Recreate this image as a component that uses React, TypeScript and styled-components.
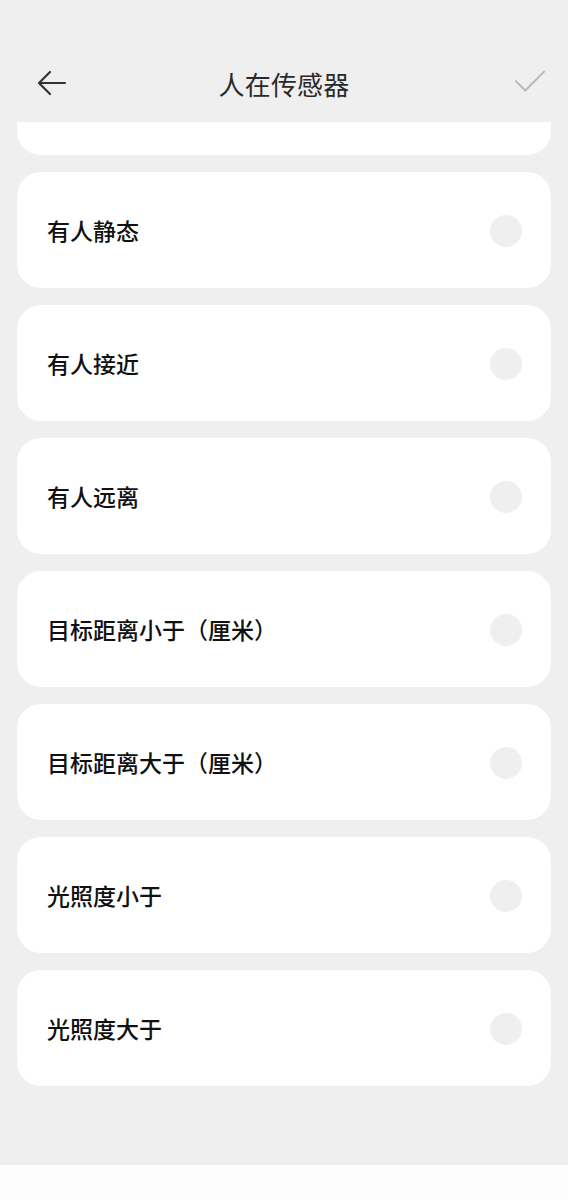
import React, { useLayoutEffect, useRef } from 'react';
import styled, { createGlobalStyle } from 'styled-components';

const GlobalStyle = createGlobalStyle`
  html, body {
    margin: 0;
    padding: 0;
    background: #efefef;
  }
  body {
    font-family: "Noto Sans CJK SC", "Noto Sans", sans-serif;
  }
`;

const Screen = styled.div`
  width: 568px;
  height: 1200px;
  display: flex;
  flex-direction: column;
  background: #efefef;
  overflow: hidden;
`;

const Header = styled.div`
  height: 122px;
  padding: 44px 22px 0;
  box-sizing: border-box;
  flex-shrink: 0;
`;

const HeaderRow = styled.div`
  height: 78px;
  display: grid;
  grid-template-columns: 1fr auto 1fr;
  align-items: center;
`;

const IconButton = styled.button<{ $side: 'left' | 'right' }>`
  border: none;
  background: none;
  padding: 0;
  width: 32px;
  height: 32px;
  display: flex;
  align-items: center;
  justify-content: center;
  cursor: pointer;
  justify-self: ${({ $side }) => ($side === 'left' ? 'start' : 'end')};
  margin-left: ${({ $side }) => ($side === 'left' ? '14px' : '0')};
`;

const Title = styled.div`
  font-size: 26px;
  color: #2a2a2a;
  letter-spacing: 0.2px;
`;

const ScrollArea = styled.div`
  flex: 1;
  overflow-y: auto;
  scrollbar-width: none;
  &::-webkit-scrollbar {
    display: none;
  }
`;

const List = styled.div`
  display: flex;
  flex-direction: column;
  gap: 17px;
  padding: 16px 17px 80px;
`;

const Card = styled.label`
  height: 116px;
  background: #fff;
  border-radius: 24px;
  display: flex;
  align-items: center;
  justify-content: space-between;
  padding: 0 29px 0 30px;
  box-sizing: border-box;
  cursor: pointer;
`;

const Label = styled.span`
  font-size: 23px;
  font-weight: 500;
  color: #111;
`;

const Radio = styled.span<{ $checked?: boolean }>`
  width: 32px;
  height: 32px;
  margin-top: 2px;
  border-radius: 50%;
  background: ${({ $checked }) => ($checked ? '#2f7cf6' : '#efefef')};
  flex-shrink: 0;
`;

const Footer = styled.div`
  height: 35px;
  background: #fdfdfd;
  flex-shrink: 0;
`;

const options = [
  '无人',
  '有人静态',
  '有人接近',
  '有人远离',
  '目标距离小于（厘米）',
  '目标距离大于（厘米）',
  '光照度小于',
  '光照度大于'
];

export default function App () {
  const scrollRef = useRef<HTMLDivElement>(null);

  useLayoutEffect(() => {
    if (scrollRef.current) {
      scrollRef.current.scrollTop = 99;
    }
  }, []);

  return (
    <Screen>
      <GlobalStyle />
      <Header>
        <HeaderRow>
          <IconButton $side='left' aria-label='back'>
            <svg width='32' height='32' viewBox='0 0 32 32' fill='none'>
              <path d='M29 16H4M14 5L3 16l11 11' stroke='#333' strokeWidth='2.2' strokeLinecap='round' strokeLinejoin='round' />
            </svg>
          </IconButton>
          <Title>人在传感器</Title>
          <IconButton $side='right' aria-label='confirm'>
            <svg width='34' height='32' viewBox='0 0 34 32' fill='none'>
              <path d='M2 14l10 10L32 4' stroke='#b8b8b8' strokeWidth='2' strokeLinecap='round' strokeLinejoin='round' />
            </svg>
          </IconButton>
        </HeaderRow>
      </Header>
      <ScrollArea ref={scrollRef}>
        <List>
          {options.map((o) => (
            <Card key={o}>
              <Label>{o}</Label>
              <Radio />
            </Card>
          ))}
        </List>
      </ScrollArea>
      <Footer />
    </Screen>
  );
}
